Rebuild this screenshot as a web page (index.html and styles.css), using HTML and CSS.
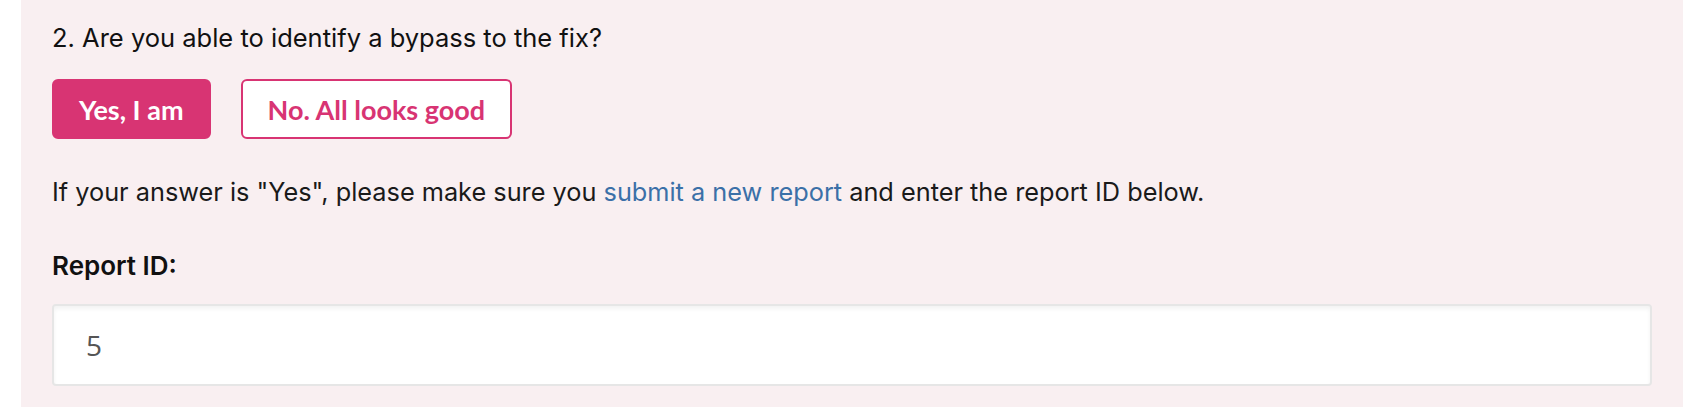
FILE: index.html
```html
<!DOCTYPE html>
<html lang="en">
<head>
<meta charset="utf-8">
<title>Bypass question</title>
<link rel="stylesheet" href="styles.css">
</head>
<body>
<div class="page">
  <section class="panel">
    <p class="question">2. Are you able to identify a bypass to the fix?</p>
    <div class="choices">
      <button class="btn btn-solid" type="button">Yes, I am</button>
      <button class="btn btn-outline" type="button">No. All looks good</button>
    </div>
    <p class="note">If your answer is "Yes", please make sure you <a class="link" href="#">submit a new report</a> and enter the report ID below.</p>
    <label class="label" for="rid">Report ID:</label>
    <input class="field" id="rid" type="text" value="5">
  </section>
</div>
</body>
</html>
```

FILE: styles.css
```css
html, body {
  margin: 0;
  padding: 0;
  background: #ffffff;
}

.page {
  padding-left: 21px;
  height: 407px;
  overflow: hidden;
}

.panel {
  width: 1662px;
  box-sizing: border-box;
  background: #f9eff1;
  padding: 20px 31px 30px 31px;
  display: flex;
  flex-direction: column;
  align-items: flex-start;
  font-family: Inter, "Liberation Sans", sans-serif;
  color: #111111;
}

.question {
  margin: 0;
  font-size: 25.5px;
  line-height: 36px;
}

.choices {
  display: flex;
  gap: 30px;
  margin-top: 23px;
}

.btn {
  box-sizing: border-box;
  height: 60px;
  padding: 0 25px;
  border: 2px solid #d83473;
  border-radius: 6px;
  font-family: Lato, "Liberation Sans", sans-serif;
  font-weight: 700;
  font-size: 27px;
  cursor: pointer;
}

.btn-solid {
  background: #d83473;
  color: #ffffff;
}

.btn-outline {
  background: #ffffff;
  color: #d83473;
}

.note {
  margin: 35px 0 0 0;
  font-size: 25.3px;
  line-height: 36px;
  color: #1a1a1a;
}

.link {
  color: #3b70a8;
  text-decoration: none;
}

.label {
  margin-top: 38px;
  font-size: 26px;
  line-height: 36px;
  font-weight: 600;
  color: #111111;
}

.field {
  margin-top: 20px;
  box-sizing: border-box;
  width: 1600px;
  height: 82px;
  padding: 0 32px;
  border: 2px solid #e6e6e6;
  border-radius: 4px;
  background: #ffffff;
  box-shadow: inset 0 3px 4px rgba(0, 0, 0, 0.05);
  font-family: "Open Sans", "Liberation Sans", sans-serif;
  font-size: 28px;
  color: #555555;
  outline: none;
}
```
